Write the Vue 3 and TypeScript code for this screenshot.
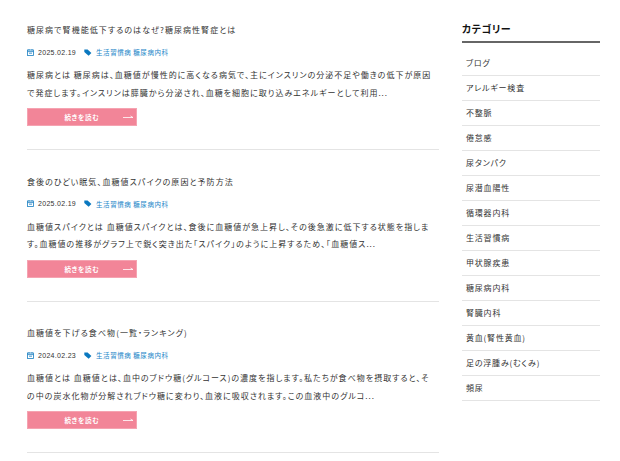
<script setup lang="ts">
interface Post {
  title: string
  date: string
  line1: string
  line2: string
}

const posts: Post[] = [
  {
    title: '糖尿病で腎機能低下するのはなぜ?糖尿病性腎症とは',
    date: '2025.02.19',
    line1: '糖尿病とは 糖尿病は、血糖値が慢性的に高くなる病気で、主にインスリンの分泌不足や働きの低下が原因',
    line2: 'で発症します。インスリンは膵臓から分泌され、血糖を細胞に取り込みエネルギーとして利用...',
  },
  {
    title: '食後のひどい眠気、血糖値スパイクの原因と予防方法',
    date: '2025.02.19',
    line1: '血糖値スパイクとは 血糖値スパイクとは、食後に血糖値が急上昇し、その後急激に低下する状態を指しま',
    line2: 'す。血糖値の推移がグラフ上で鋭く突き出た「スパイク」のように上昇するため、「血糖値ス...',
  },
  {
    title: '血糖値を下げる食べ物(一覧・ランキング)',
    date: '2024.02.23',
    line1: '血糖値とは 血糖値とは、血中のブドウ糖(グルコース)の濃度を指します。私たちが食べ物を摂取すると、そ',
    line2: 'の中の炭水化物が分解されブドウ糖に変わり、血液に吸収されます。この血液中のグルコ...',
  },
]

const categories: string[] = [
  'ブログ', 'アレルギー検査', '不整脈', '倦怠感', '尿タンパク', '尿潜血陽性', '循環器内科',
  '生活習慣病', '甲状腺疾患', '糖尿病内科', '腎臓内科', '黄血(腎性黄血)', '足の浮腫み(むくみ)', '頻尿',
]
</script>

<template>
  <div class="page">
    <main class="main">
      <article v-for="post in posts" :key="post.title" class="post">
        <h2 class="title">{{ post.title }}</h2>
        <div class="meta">
          <svg class="cal" viewBox="0 0 7 7" width="7" height="7" aria-hidden="true">
            <rect x="0.5" y="1" width="6" height="5.5" fill="none" stroke="#1a7fc1" stroke-width="0.8" />
            <path d="M0.5 2.6H6.5M2 0V1.5M5 0V1.5M2 4.2H5" stroke="#1a7fc1" stroke-width="0.8" fill="none" />
          </svg>
          <span class="date">{{ post.date }}</span>
          <svg class="tag" viewBox="0 0 8 7" width="8" height="7" aria-hidden="true">
            <path d="M0.3 0.4H3.6L7.4 4.1L4.6 6.8L0.3 2.9Z" fill="#0a78bf" />
          </svg>
          <span class="cats"><span>生活習慣病</span> <span>糖尿病内科</span></span>
        </div>
        <p class="excerpt">{{ post.line1 }}<br />{{ post.line2 }}</p>
        <a class="more">
          <span class="more-label">続きを読む</span>
          <svg class="arrow" viewBox="0 0 10 3" width="10" height="3" aria-hidden="true">
            <path d="M0 2.5H10M7.5 1L10 2.5" fill="none" stroke="#fff" stroke-width="0.8" />
          </svg>
        </a>
      </article>
    </main>
    <aside class="side">
      <h3 class="side-title">カテゴリー</h3>
      <ul class="side-list">
        <li v-for="c in categories" :key="c">{{ c }}</li>
      </ul>
    </aside>
  </div>
</template>

<style scoped>
.page {
  display: flex;
  align-items: flex-start;
  width: 620px;
  height: 461px;
  overflow: hidden;
  box-sizing: border-box;
  padding: 23px 20px 0 27px;
  gap: 23px;
  background: #fff;
  font-family: "Noto Sans CJK JP", "Noto Sans", sans-serif;
  font-feature-settings: "palt";
  color: #333;
}
.main {
  width: 412px;
  flex: none;
}
.post {
  padding-bottom: 23px;
  margin-bottom: 24.5px;
  border-bottom: 1px solid #e4e4e4;
}
.title {
  margin: 0;
  font-size: 8px;
  font-weight: 400;
  line-height: 14px;
  letter-spacing: 1.05px;
  white-space: nowrap;
}
.meta {
  display: flex;
  align-items: center;
  height: 12px;
  margin-top: 9px;
  font-size: 6.5px;
}
.cal {
  margin-right: 4px;
}
.date {
  font-family: "Liberation Sans", sans-serif;
  font-size: 7px;
  letter-spacing: 0.3px;
  margin-right: 8px;
}
.tag {
  margin-right: 4px;
}
.cats {
  color: #1a85c8;
  letter-spacing: 0.55px;
  white-space: nowrap;
}
.excerpt {
  margin: 8px 0 0;
  font-size: 8px;
  line-height: 17.5px;
  letter-spacing: 1px;
  white-space: nowrap;
}
.more {
  position: relative;
  display: flex;
  align-items: center;
  justify-content: center;
  width: 110px;
  height: 18px;
  margin-top: 7px;
  box-sizing: border-box;
  background: #f28598;
  border: 1px solid #f5a3b1;
  color: #fff;
  font-size: 6.5px;
  font-weight: 700;
  letter-spacing: 0.7px;
}
.arrow {
  position: absolute;
  right: 3.5px;
  top: 6px;
}
.side {
  width: 138px;
  flex: none;
  margin-top: -3px;
}
.side-title {
  margin: 0;
  height: 21px;
  font-size: 10px;
  font-weight: 700;
  line-height: 18px;
  color: #111;
  border-bottom: 2px solid #666;
  letter-spacing: 0.5px;
}
.side-list {
  list-style: none;
  margin: 0;
  padding: 8px 0 0;
}
.side-list li {
  height: 25px;
  box-sizing: border-box;
  padding: 0 4px;
  font-size: 8px;
  line-height: 23px;
  letter-spacing: 0.8px;
  border-bottom: 1px solid #e4e4e4;
  white-space: nowrap;
}
</style>
